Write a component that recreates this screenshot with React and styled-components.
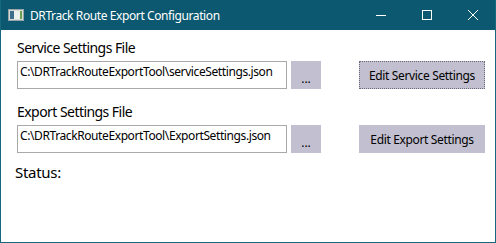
import React from 'react'
import styled, { createGlobalStyle } from 'styled-components'

const GlobalStyle = createGlobalStyle`
    html, body {
        margin:0;
        padding:0;
        background:#ffffff;
    }
    body {
        font-family:"Noto Sans", "Open Sans", sans-serif;
    }
`;

function App() {
    return (
        <>
            <GlobalStyle />
            <Window>
                <TitleBar>
                    <AppIcon viewBox="0 0 16 12">
                        <rect x="0.5" y="0.5" width="15" height="11" fill="#d8dcd8" stroke="#9aa4a8" />
                        <rect x="2" y="2" width="4" height="8" fill="#3d6f8a" />
                        <rect x="6" y="2" width="6" height="8" fill="#eef2ee" />
                        <rect x="12" y="2" width="2" height="8" fill="#6aa050" />
                    </AppIcon>
                    <Title>DRTrack Route Export Configuration</Title>
                    <Controls>
                        <ControlButton>
                            <svg width="10" height="10" viewBox="0 0 10 10">
                                <line x1="0" y1="5.5" x2="10" y2="5.5" stroke="#fff" strokeWidth="1" />
                            </svg>
                        </ControlButton>
                        <ControlButton>
                            <svg width="10" height="10" viewBox="0 0 10 10">
                                <rect x="0.5" y="0.5" width="9" height="9" fill="none" stroke="#fff" strokeWidth="1" />
                            </svg>
                        </ControlButton>
                        <ControlButton>
                            <svg width="10" height="10" viewBox="0 0 10 10">
                                <path d="M0 0 L10 10 M10 0 L0 10" stroke="#fff" strokeWidth="1" />
                            </svg>
                        </ControlButton>
                    </Controls>
                </TitleBar>
                <Content>
                    <Section>
                        <Label>Service Settings File</Label>
                        <Row>
                            <PathBox>C:\DRTrackRouteExportTool\serviceSettings.json</PathBox>
                            <BrowseButton>...</BrowseButton>
                            <EditButton focused>Edit Service Settings</EditButton>
                        </Row>
                    </Section>
                    <Section>
                        <Label>Export Settings File</Label>
                        <Row>
                            <PathBox>C:\DRTrackRouteExportTool\ExportSettings.json</PathBox>
                            <BrowseButton>...</BrowseButton>
                            <EditButton>Edit Export Settings</EditButton>
                        </Row>
                    </Section>
                    <Status>Status:</Status>
                </Content>
            </Window>
        </>
    )
}

const Window = styled.div`
    width:496px;
    height:243px;
    box-sizing:border-box;
    border:1px solid #16697c;
    border-top:none;
    display:flex;
    flex-direction:column;
    background:#ffffff;
    overflow:hidden;
`;

const TitleBar = styled.div`
    height:30px;
    margin:0 -1px;
    background:#0b5870;
    display:flex;
    align-items:center;
    color:#ffffff;
    flex-shrink:0;
`;

const AppIcon = styled.svg`
    width:16px;
    height:12px;
    margin-left:8px;
    margin-right:6px;
`;

const Title = styled.div`
    font-size:12px;
    flex-grow:1;
    white-space:nowrap;
    letter-spacing:-0.4px;
`;

const Controls = styled.div`
    display:flex;
    height:100%;
`;

const ControlButton = styled.div`
    width:46px;
    height:30px;
    display:flex;
    align-items:center;
    justify-content:center;
`;

const Content = styled.div`
    padding:8px 8px 0 16px;
    display:flex;
    flex-direction:column;
`;

const Section = styled.div`
    display:flex;
    flex-direction:column;
    margin-bottom:13px;
`;

const Label = styled.div`
    font-size:14px;
    line-height:19px;
    color:#000000;
    margin-bottom:4px;
    letter-spacing:-0.55px;
`;

const Row = styled.div`
    display:flex;
    align-items:flex-start;
`;

const PathBox = styled.div`
    width:270px;
    height:28px;
    box-sizing:border-box;
    border:1px solid #a9a9a9;
    padding:2px 2px;
    font-size:12px;
    line-height:16px;
    color:#000000;
    white-space:nowrap;
    overflow:hidden;
    letter-spacing:-0.4px;
`;

const BrowseButton = styled.div`
    width:30px;
    height:28px;
    margin-left:4px;
    background:#c2c0d0;
    display:flex;
    align-items:flex-end;
    justify-content:center;
    font-size:12px;
    line-height:20px;
    color:#000000;
`;

const EditButton = styled.div`
    width:126px;
    height:28px;
    margin-left:38px;
    box-sizing:border-box;
    background:#c2c0d0;
    display:flex;
    align-items:center;
    justify-content:center;
    font-size:12px;
    color:#000000;
    white-space:nowrap;
    border:${(props) => (props.focused ? "1px dotted #6c6a78" : "1px solid #c2c0d0")};
    outline:1px solid #c2c0d0;
    outline-offset:-2px;
    letter-spacing:-0.35px;
`;

const Status = styled.div`
    font-size:15px;
    line-height:20px;
    margin-left:-2px;
    margin-top:-4px;
    color:#000000;
    letter-spacing:-0.3px;
`;

export default App
